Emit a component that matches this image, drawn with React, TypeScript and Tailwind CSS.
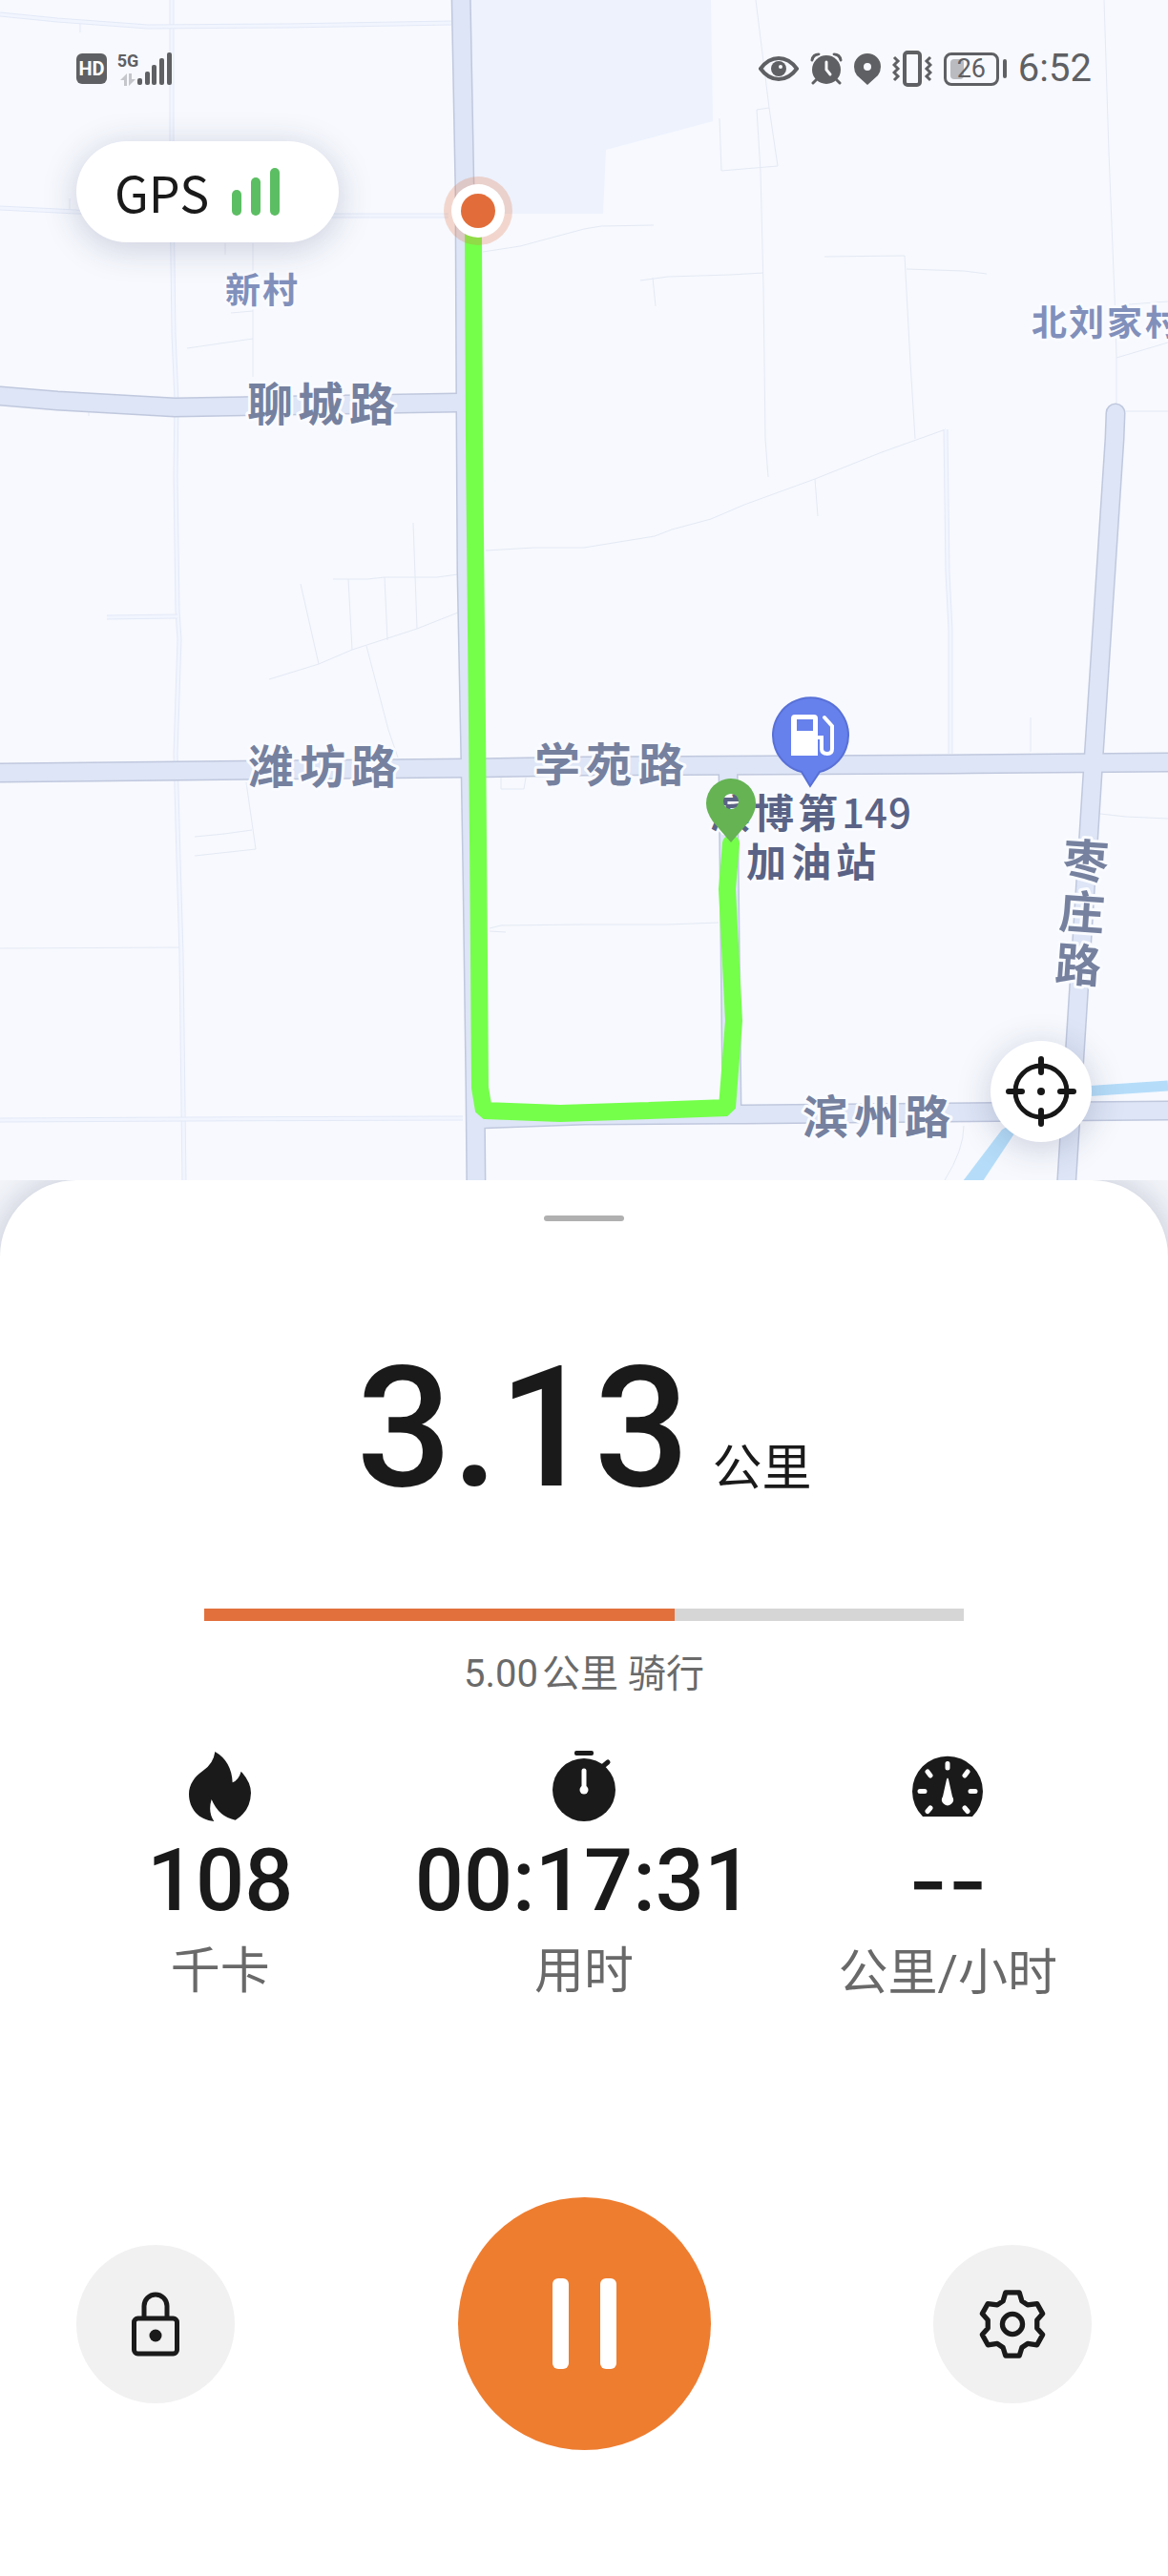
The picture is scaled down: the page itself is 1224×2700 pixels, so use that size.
import type { ReactNode } from "react";

const sans = "font-['Roboto','Noto_Sans_CJK_SC',sans-serif]";
const cjk = "font-['Noto_Sans_CJK_SC',sans-serif]";

const majorRoads = [
  "M0 415 L60 420 L183 427 L480 422",
  "M0 810 L187 808 L490 805 L612 803 L998 801 L1224 799",
  "M500 1173 L612 1169 L780 1168 L1224 1164",
  "M483 -10 L487 200 L488 430 L489 600 L493 800 L495 920 L498 1140 L499 1250",
  "M763 805 L767 1165",
  "M1169 433 L1168 460 L1146 795 L1126 1108 L1117 1250",
];

const doubleLanes = [
  "M180 0 L180 200 L182 350 L185 420 L184 500 L186 640 L188 670 L184 790 L187 900 L190 1000 L193 1240",
  "M0 15 L60 21 L155 28 L300 27 L473 24",
  "M0 218 L80 222 L350 226 L470 226",
  "M112 647 L186 646",
  "M0 1174 L200 1173 L485 1172",
  "M991 450 L993 600 L996 660 L996 790",
];

const lanes = [
  "M84 23 V34",
  "M73 208 V222",
  "M236 255 V267",
  "M265 255 V395",
  "M242 328 L265 326",
  "M196 365 L265 355",
  "M93 432 V436",
  "M506 264 L545 258 L612 240 L630 237 L685 236",
  "M792 0 L806 113 L815 174 L756 179 L754 124",
  "M806 113 L793 115 L797 180 L800 300 L802 460 L805 500",
  "M671 294 L700 290 L765 288 L800 286",
  "M684 291 L687 321",
  "M864 269 L948 268 L954 380 L959 460",
  "M950 282 L1010 284 L1034 287",
  "M1157 0 L1162 160 L1168 310 L1170 374 V423",
  "M1170 375 L1224 359",
  "M1178 431 H1224",
  "M1183 319 L1224 316",
  "M509 577 L560 574 L612 574 L686 562 L704 555 L745 544 L780 529 L854 502 L924 474 L991 450",
  "M854 502 L857 541",
  "M1080 752 V788",
  "M1153 853 L1180 856 L1224 858",
  "M513 973 L525 970 L612 969 L700 969 L753 967",
  "M513 976 L530 977",
  "M1010 1180 Q1010 1205 990 1237",
  "M282 712 L334 696 L369 681 L437 659 L480 642",
  "M315 612 L334 696",
  "M349 607 L385 607 L403 605 L458 605 L480 602",
  "M365 607 L369 681",
  "M403 605 L406 671",
  "M433 548 L437 659",
  "M384 677 L407 765 L417 794",
  "M258 820 L268 890",
  "M204 877 L235 874 L264 870",
  "M204 897 L268 890",
  "M525 815 V827 H549 L551 815",
  "M0 994 L190 993",
];

// one x per character, the way the map engine places its glyphs
const roadNames = [
  { text: "聊城路", x: "259 312 366", y: 441 },
  { text: "潍坊路", x: "260 314 368", y: 821 },
  { text: "学苑路", x: "560 614 669", y: 819 },
  { text: "滨州路", x: "841 895 948", y: 1188 },
];

const verticalRoadName = [
  { char: "枣", x: 1138, y: 902 },
  { char: "庄", x: 1134, y: 956 },
  { char: "路", x: 1130, y: 1011 },
];

const villages = [
  { text: "新村", x: "236 275", y: 318 },
  { text: "北刘家村", x: "1081 1120 1160 1200", y: 352 },
];

function RouteMap() {
  return (
    <svg
      viewBox="0 0 1224 1237"
      preserveAspectRatio="xMidYMid slice"
      className="block h-full w-full"
      role="img"
      aria-label="骑行轨迹地图"
    >
      <rect width="1224" height="1237" fill="#f7f9fe" />
      <path d="M493 0 H745 L747 127 L635 157 L632 224 H497 Z" fill="#edf2fd" />
      <g fill="none" stroke="#e4e9f3" strokeWidth="1">
        {lanes.map((d) => (
          <path key={d} d={d} />
        ))}
      </g>
      {doubleLanes.map((d) => (
        <g key={d} fill="none">
          <path d={d} stroke="#e3e9f7" strokeWidth="5" />
          <path d={d} stroke="#f1f5fe" strokeWidth="3" />
        </g>
      ))}
      <path d="M1120 1145 L1224 1138" stroke="#b5ddf9" strokeWidth="11" />
      <path d="M1009 1238 L1050 1184 L1075 1170 L1030 1238 Z" fill="#b5ddf9" />
      <g fill="none" stroke="#c0c8de" strokeWidth="21" strokeLinecap="round">
        {majorRoads.map((d) => (
          <path key={d} d={d} />
        ))}
      </g>
      <g fill="none" stroke="#dde5f6" strokeWidth="18" strokeLinecap="round">
        {majorRoads.map((d) => (
          <path key={d} d={d} />
        ))}
      </g>

      <g
        className={cjk}
        fontWeight="700"
        stroke="#f9fbff"
        strokeWidth="6"
        strokeLinejoin="round"
        paintOrder="stroke"
      >
        <g fontSize="48" fill="#76819f">
          {roadNames.map((name) => (
            <text key={name.text} x={name.x} y={name.y}>
              {name.text}
            </text>
          ))}
          {verticalRoadName.map((item) => (
            <text
              key={item.char}
              x={item.x}
              y={item.y + 18}
              textAnchor="middle"
              transform={`rotate(4 ${item.x} ${item.y})`}
            >
              {item.char}
            </text>
          ))}
        </g>
        <g fontSize="37" fill="#8190bb">
          {villages.map((name) => (
            <text key={name.text} x={name.x} y={name.y}>
              {name.text}
            </text>
          ))}
        </g>
        <g fontSize="42" fill="#5a6385">
          <text x="744 790 836 882 906 931" y="868">
            滨博第<tspan fontWeight="500">149</tspan>
          </text>
          <text x="782 829 876" y="919">
            加油站
          </text>
        </g>
      </g>

      <path
        d="M849 824 L840 809 A39.5 39.5 0 1 1 859 809 Z"
        fill="#6680ec"
        stroke="#5870d6"
        strokeWidth="2"
      />
      <path
        fillRule="evenodd"
        d="M833 749 H853 Q857 749 857 753 V792 H829 V753 Q829 749 833 749 Z M835 754 V766 H852 V754 Z"
        fill="#fff"
      />
      <path
        d="M857 773 H861 V785 Q861 790 867 790 Q872 790 872 785 V761 L864 752"
        fill="none"
        stroke="#fff"
        strokeWidth="4"
        strokeLinecap="round"
      />

      <path
        d="M496 245 L497 460 L500 760 L502 1000 L503 1140 L507 1164 L587 1167 L680 1164 L762 1161 L769 1070 L762 932 L766 884"
        fill="none"
        stroke="#75ff4b"
        strokeWidth="18"
        strokeLinejoin="bevel"
        strokeLinecap="round"
      />
      <path
        fillRule="evenodd"
        d="M766 883 L747 861 Q740 851 740 842 A26 26 0 0 1 792 842 Q792 851 785 861 Z M758 840 A8 8 0 1 0 774 840 A8 8 0 1 0 758 840 Z"
        fill="#65b353"
      />

      <circle cx="501" cy="221" r="36" fill="#e2703c" fillOpacity="0.25" />
      <circle cx="501" cy="221" r="28" fill="#fff" />
      <circle cx="501" cy="221" r="18" fill="#e26d3a" />
    </svg>
  );
}

function StatusBar() {
  return (
    <header
      className={`${sans} absolute inset-x-0 top-0 flex items-center justify-between px-20 pt-[52px] text-[#5f6063]`}
    >
      <div className="flex items-center gap-3">
        <span className="flex h-8 w-8 items-center justify-center rounded-md bg-[#5f6063] text-[20px] leading-none font-bold text-white">
          HD
        </span>
        <div className="flex items-end">
          <div className="flex w-5 flex-col items-center gap-1">
            <span className="text-[18px] leading-none font-bold">5G</span>
            <svg viewBox="0 0 16 13" className="h-[13px] w-4 fill-[#c4c6cb]">
              <path d="M7 13 H4 V7 H0 L7 0 Z M9 0 H12 V6 H16 L9 13 Z" />
            </svg>
          </div>
          <svg viewBox="0 0 36 36" className="h-9 w-9 fill-current">
            <rect x="0" y="28" width="5" height="7" rx="2" />
            <rect x="8" y="21" width="5" height="14" rx="2" />
            <rect x="15" y="14" width="5" height="21" rx="2" />
            <rect x="23" y="7" width="5" height="28" rx="2" />
            <rect x="31" y="1" width="5" height="34" rx="2" />
          </svg>
        </div>
      </div>

      <div className="flex items-center gap-3">
        <svg viewBox="0 0 42 28" className="h-7 w-[42px]">
          <path
            d="M2 14 Q10 3 21 3 Q32 3 40 14 Q32 25 21 25 Q10 25 2 14 Z"
            fill="none"
            stroke="currentColor"
            strokeWidth="4"
          />
          <circle cx="21" cy="14" r="8" fill="currentColor" />
          <circle cx="23" cy="12" r="2" fill="#f7f9fe" />
        </svg>
        <svg viewBox="0 0 34 34" className="h-[34px] w-[34px]">
          <path
            d="M2 8 Q3 2 9 2 M32 8 Q31 2 25 2"
            fill="none"
            stroke="currentColor"
            strokeWidth="3"
            strokeLinecap="round"
          />
          <circle cx="17" cy="17" r="16" fill="#f7f9fe" />
          <circle cx="17" cy="18" r="15" fill="currentColor" />
          <path d="M7 28 L3 32 M27 28 L31 32" stroke="currentColor" strokeWidth="3" strokeLinecap="round" />
          <path d="M17 10 V18 L21 23" fill="none" stroke="#f7f9fe" strokeWidth="3" strokeLinecap="round" />
        </svg>
        <svg viewBox="0 0 28 33" className="h-[33px] w-7 fill-current">
          <path
            fillRule="evenodd"
            d="M14 33 L3 23 Q0 19 0 14 A14 14 0 0 1 28 14 Q28 19 25 23 Z M10 14 A4 4 0 1 0 18 14 A4 4 0 1 0 10 14 Z"
          />
        </svg>
        <svg viewBox="0 0 42 38" className="h-[38px] w-[42px]" fill="none" stroke="currentColor">
          <rect x="13" y="2" width="16" height="34" rx="3" strokeWidth="4" />
          <path
            d="M2 7 L6 11 L2 15 L6 19 L2 23 L6 27 L2 31 M40 7 L36 11 L40 15 L36 19 L40 23 L36 27 L40 31"
            strokeWidth="3"
          />
        </svg>
        <div className="flex items-center gap-1">
          <div className="relative flex h-[35px] w-[58px] items-center justify-center rounded-lg border-3 border-current">
            <span className="absolute inset-y-1 left-1 w-3.5 rounded-sm bg-[#b9bbc0]" />
            <span className="relative text-[27px] leading-none">26</span>
          </div>
          <span className="h-5 w-1 rounded-sm bg-current" />
        </div>
        <time className="text-[40px] leading-none">6:52</time>
      </div>
    </header>
  );
}

function GpsBadge() {
  return (
    <div
      className={`${cjk} absolute top-[148px] left-20 flex h-[106px] w-[275px] items-center gap-6 rounded-full bg-white pl-10 shadow-[0_6px_36px_rgba(40,50,90,0.22)]`}
    >
      <span className="text-[52px] leading-none text-[#1a1a1a]">GPS</span>
      <div className="flex items-end gap-2.5">
        <span className="h-[27px] w-2.5 rounded-full bg-[#5cbe63]" />
        <span className="h-10 w-2.5 rounded-full bg-[#5cbe63]" />
        <span className="h-[50px] w-2.5 rounded-full bg-[#5cbe63]" />
      </div>
    </div>
  );
}

function LocateButton() {
  return (
    <button
      aria-label="定位"
      className="absolute right-20 bottom-10 flex h-[106px] w-[106px] items-center justify-center rounded-full bg-white shadow-[0_6px_36px_rgba(40,50,90,0.22)]"
    >
      <svg viewBox="0 0 74 74" className="h-[74px] w-[74px]" fill="none" stroke="#171717">
        <circle cx="37" cy="37" r="27" strokeWidth="5" />
        <path
          d="M3 37 H17 M57 37 H71 M37 3 V17 M37 57 V71"
          strokeWidth="6"
          strokeLinecap="round"
        />
        <circle cx="37" cy="37" r="4" fill="#171717" stroke="none" />
      </svg>
    </button>
  );
}

function FlameIcon() {
  return (
    <svg viewBox="291 110 195 219" className="h-[73px] w-[65px] fill-[#1a1a1a]">
      <path d="M373 110 Q425 140 428 207 Q448 198 455 172 Q486 205 486 240 Q484 298 437 325 Q385 315 362 260 Q350 300 370 329 C322 325 291 290 291 243 C291 215 308 188 335 170 Q368 148 373 110 Z" />
    </svg>
  );
}

function StopwatchIcon() {
  return (
    <svg viewBox="0 0 66 74" className="h-[74px] w-[66px]">
      <rect x="23" y="0" width="20" height="5" rx="2" fill="#1a1a1a" />
      <path d="M52 17 L58 12" stroke="#1a1a1a" strokeWidth="5" strokeLinecap="round" />
      <circle cx="33" cy="41" r="33" fill="#1a1a1a" />
      <path d="M33 21 V41" stroke="#fff" strokeWidth="5" strokeLinecap="round" />
      <circle cx="33" cy="41" r="4.5" fill="#fff" />
    </svg>
  );
}

function GaugeIcon() {
  return (
    <svg viewBox="0 0 74 64" className="h-16 w-[74px]">
      <path d="M11 64 A37 37 0 1 1 63 64 Z" fill="#1a1a1a" />
      <path
        d="M37 8.500 V13 M8 37.500 H13 M61 37.500 H66 M16 17 L19 21 M58 17 L55 21 M19 55 L16 58.500 M55 55 L58 58.500"
        stroke="#fff"
        strokeWidth="5"
        strokeLinecap="round"
      />
      <path d="M36 25 Q37 22 38 25 L42 43 A6 6 0 1 1 32 43 Z" fill="#fff" />
    </svg>
  );
}

function LockIcon() {
  return (
    <svg viewBox="0 0 50 68" className="h-[68px] w-[50px]" fill="none" stroke="#1a1a1a" strokeWidth="5">
      <rect x="2.500" y="28" width="45" height="37" rx="4" />
      <path d="M13 28 V15 A12 12 0 0 1 37 15 V28" />
      <circle cx="25" cy="46" r="6.500" fill="#1a1a1a" stroke="none" />
    </svg>
  );
}

function GearIcon() {
  return (
    <svg
      viewBox="256 236 212 218"
      className="h-[72px] w-[70px]"
      fill="none"
      stroke="#1a1a1a"
      strokeWidth="16"
      strokeLinejoin="round"
    >
      <path d="M340 245 H384 L392 272 L410 284 L440 280 L458 312 L440 332 V358 L458 378 L440 411 L410 407 L392 419 L384 445 H340 L332 419 L314 407 L284 411 L266 378 L284 358 V332 L266 312 L284 280 L314 284 L332 272 Z" />
      <circle cx="362" cy="345" r="32" />
    </svg>
  );
}

type StatProps = { icon: ReactNode; value: ReactNode; label: string };

function Stat({ icon, value, label }: StatProps) {
  return (
    <div className="flex flex-col items-center">
      <div className="flex h-[74px] items-center">{icon}</div>
      <p className="mt-[18px] text-[90px] leading-none font-medium text-[#1a1a1a]">{value}</p>
      <p className="mt-6 text-[52px] leading-none text-[#696969]">{label}</p>
    </div>
  );
}

export default function App() {
  return (
    <main className={`${sans} flex min-h-screen flex-col bg-[#f3f5fa]`}>
      <section className="relative h-[1237px] overflow-hidden">
        <RouteMap />
        <StatusBar />
        <GpsBadge />
        <LocateButton />
      </section>

      <section className="flex grow flex-col items-center rounded-t-[80px] bg-white pt-[37px] shadow-[0_0_36px_rgba(40,50,90,0.25)]">
        <span className="h-1.5 w-[84px] rounded-full bg-[#b0b0b0]" />

        <div className="mt-[129px] flex items-baseline gap-6 text-[#1a1a1a]">
          <span className="text-[176px] leading-none font-medium">3.13</span>
          <span className="text-[52px] leading-none">公里</span>
        </div>

        <div
          role="progressbar"
          aria-label="骑行目标"
          aria-valuenow={62}
          aria-valuemin={0}
          aria-valuemax={100}
          className="mt-[101px] h-[13px] w-[65%] bg-[#d6d6d6]"
        >
          <div className="h-full w-[62%] bg-[#e2703c]" />
        </div>
        <p className="mt-9 flex items-baseline text-[40px] leading-none text-[#6a6a6a]">
          <span className="mr-1">5.00</span>
          <span>公里 骑行</span>
        </p>

        <div className="mt-[60px] grid w-full grid-cols-3 px-10">
          <Stat icon={<FlameIcon />} value="108" label="千卡" />
          <Stat icon={<StopwatchIcon />} value="00:17:31" label="用时" />
          <Stat
            icon={<GaugeIcon />}
            value={<span className="font-['Inter',sans-serif]">--</span>}
            label="公里/小时"
          />
        </div>

        <div className="mt-[208px] mb-[130px] flex w-full items-center justify-between px-20">
          <button
            aria-label="锁定"
            className="flex h-[166px] w-[166px] items-center justify-center rounded-full bg-[#f1f1f1]"
          >
            <LockIcon />
          </button>
          <button
            aria-label="暂停"
            className="flex h-[265px] w-[265px] items-center justify-center gap-[33px] rounded-full bg-[#ee7d30]"
          >
            <span className="h-[95px] w-[17px] rounded-md bg-white" />
            <span className="h-[95px] w-[17px] rounded-md bg-white" />
          </button>
          <button
            aria-label="设置"
            className="flex h-[166px] w-[166px] items-center justify-center rounded-full bg-[#f1f1f1]"
          >
            <GearIcon />
          </button>
        </div>
      </section>
    </main>
  );
}
